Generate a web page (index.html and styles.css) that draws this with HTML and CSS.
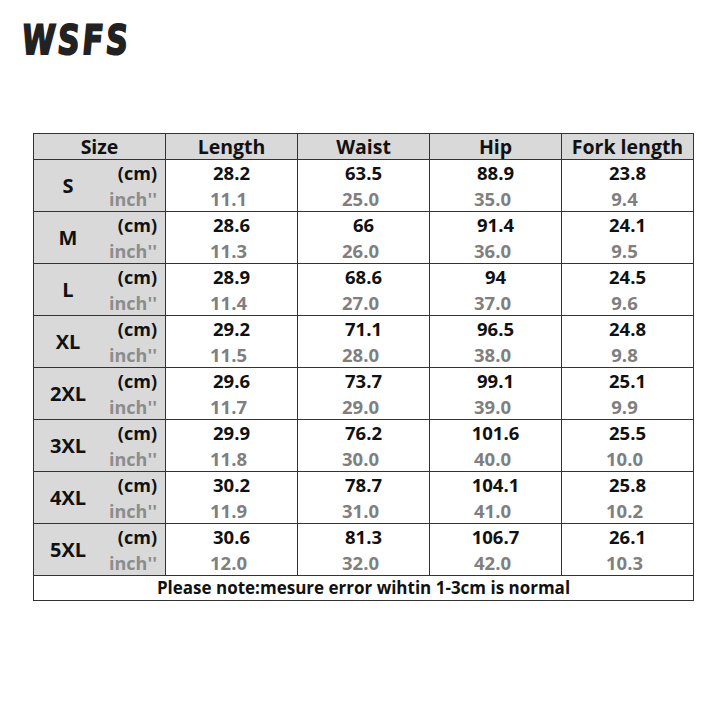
FILE: index.html
```html
<!DOCTYPE html>
<html>
<head>
<meta charset="utf-8">
<link rel="stylesheet" href="styles.css">
</head>
<body>
<div class="page">
  <div class="logo"><span class="logo-text">WSFS</span></div>
  <table class="chart">
    <colgroup>
      <col class="c"><col class="c"><col class="c"><col class="c"><col class="c">
    </colgroup>
    <thead>
      <tr class="head">
        <th>Size</th>
        <th>Length</th>
        <th>Waist</th>
        <th>Hip</th>
        <th>Fork length</th>
      </tr>
    </thead>
    <tbody>
      <tr><td class="size"><div class="sz"><span class="lbl">S</span><span class="units"><span class="u-cm">(cm)</span><span class="u-in">inch''</span></span></div></td>
        <td><div class="v"><span class="cm">28.2</span><span class="in">11.1</span></div></td>
        <td><div class="v"><span class="cm">63.5</span><span class="in">25.0</span></div></td>
        <td><div class="v"><span class="cm">88.9</span><span class="in">35.0</span></div></td>
        <td><div class="v"><span class="cm">23.8</span><span class="in">9.4</span></div></td></tr>
      <tr><td class="size"><div class="sz"><span class="lbl">M</span><span class="units"><span class="u-cm">(cm)</span><span class="u-in">inch''</span></span></div></td>
        <td><div class="v"><span class="cm">28.6</span><span class="in">11.3</span></div></td>
        <td><div class="v"><span class="cm">66</span><span class="in">26.0</span></div></td>
        <td><div class="v"><span class="cm">91.4</span><span class="in">36.0</span></div></td>
        <td><div class="v"><span class="cm">24.1</span><span class="in">9.5</span></div></td></tr>
      <tr><td class="size"><div class="sz"><span class="lbl">L</span><span class="units"><span class="u-cm">(cm)</span><span class="u-in">inch''</span></span></div></td>
        <td><div class="v"><span class="cm">28.9</span><span class="in">11.4</span></div></td>
        <td><div class="v"><span class="cm">68.6</span><span class="in">27.0</span></div></td>
        <td><div class="v"><span class="cm">94</span><span class="in">37.0</span></div></td>
        <td><div class="v"><span class="cm">24.5</span><span class="in">9.6</span></div></td></tr>
      <tr><td class="size"><div class="sz"><span class="lbl">XL</span><span class="units"><span class="u-cm">(cm)</span><span class="u-in">inch''</span></span></div></td>
        <td><div class="v"><span class="cm">29.2</span><span class="in">11.5</span></div></td>
        <td><div class="v"><span class="cm">71.1</span><span class="in">28.0</span></div></td>
        <td><div class="v"><span class="cm">96.5</span><span class="in">38.0</span></div></td>
        <td><div class="v"><span class="cm">24.8</span><span class="in">9.8</span></div></td></tr>
      <tr><td class="size"><div class="sz"><span class="lbl">2XL</span><span class="units"><span class="u-cm">(cm)</span><span class="u-in">inch''</span></span></div></td>
        <td><div class="v"><span class="cm">29.6</span><span class="in">11.7</span></div></td>
        <td><div class="v"><span class="cm">73.7</span><span class="in">29.0</span></div></td>
        <td><div class="v"><span class="cm">99.1</span><span class="in">39.0</span></div></td>
        <td><div class="v"><span class="cm">25.1</span><span class="in">9.9</span></div></td></tr>
      <tr><td class="size"><div class="sz"><span class="lbl">3XL</span><span class="units"><span class="u-cm">(cm)</span><span class="u-in">inch''</span></span></div></td>
        <td><div class="v"><span class="cm">29.9</span><span class="in">11.8</span></div></td>
        <td><div class="v"><span class="cm">76.2</span><span class="in">30.0</span></div></td>
        <td><div class="v"><span class="cm">101.6</span><span class="in">40.0</span></div></td>
        <td><div class="v"><span class="cm">25.5</span><span class="in">10.0</span></div></td></tr>
      <tr><td class="size"><div class="sz"><span class="lbl">4XL</span><span class="units"><span class="u-cm">(cm)</span><span class="u-in">inch''</span></span></div></td>
        <td><div class="v"><span class="cm">30.2</span><span class="in">11.9</span></div></td>
        <td><div class="v"><span class="cm">78.7</span><span class="in">31.0</span></div></td>
        <td><div class="v"><span class="cm">104.1</span><span class="in">41.0</span></div></td>
        <td><div class="v"><span class="cm">25.8</span><span class="in">10.2</span></div></td></tr>
      <tr><td class="size"><div class="sz"><span class="lbl">5XL</span><span class="units"><span class="u-cm">(cm)</span><span class="u-in">inch''</span></span></div></td>
        <td><div class="v"><span class="cm">30.6</span><span class="in">12.0</span></div></td>
        <td><div class="v"><span class="cm">81.3</span><span class="in">32.0</span></div></td>
        <td><div class="v"><span class="cm">106.7</span><span class="in">42.0</span></div></td>
        <td><div class="v"><span class="cm">26.1</span><span class="in">10.3</span></div></td></tr>
      <tr class="note"><td colspan="5">Please note:mesure error wihtin 1-3cm is normal</td></tr>
    </tbody>
  </table>
</div>
</body>
</html>
```

FILE: styles.css
```css
html, body {
  margin: 0;
  padding: 0;
  background: #ffffff;
}
.page {
  width: 723px;
  height: 723px;
  padding: 0 0 0 33px;
  box-sizing: border-box;
  font-family: "Open Sans", "Noto Sans", "DejaVu Sans", sans-serif;
  font-weight: 700;
  color: #111;
}
.logo {
  height: 133px;
  padding-top: 20px;
  box-sizing: border-box;
  margin-left: -12px;
}
.logo-text {
  display: inline-block;
  font-family: "DejaVu Sans", sans-serif;
  font-weight: 900;
  font-style: italic;
  font-size: 30px;
  line-height: 30px;
  letter-spacing: 3px;
  color: #222;
  -webkit-text-stroke: 1.5px #222;
  transform: scale(1.0, 1.35) skewX(4deg);
  transform-origin: left top;
}
.chart {
  border-collapse: collapse;
  width: 661px;
  table-layout: fixed;
}
.chart col.c {
  width: 132px;
}
.chart th, .chart td {
  border: 1px solid #333;
  padding: 0;
  text-align: center;
}
.head th {
  background: #d9d9d9;
  height: 25px;
  font-size: 19.5px;
  line-height: 25px;
  font-weight: 700;
  color: #111;
  white-space: nowrap;
}
.chart td.size {
  background: #d9d9d9;
  height: 51px;
}
.sz {
  display: flex;
  align-items: center;
  height: 51px;
}
.lbl {
  width: 68px;
  text-align: center;
  font-size: 20px;
  color: #111;
}
.units {
  display: flex;
  flex-direction: column;
  align-items: flex-end;
  flex: 1;
  padding-right: 8px;
  font-size: 18px;
  line-height: 26px;
}
.u-cm { color: #111; }
.u-in { color: #8c8c8c; }
.v {
  display: flex;
  flex-direction: column;
  align-items: center;
  height: 51px;
  font-size: 18.5px;
  line-height: 26px;
}
.cm { color: #111; }
.in { color: #7f7f7f; margin-right: 6px; }
.note td {
  height: 24px;
  font-size: 17px;
  line-height: 24px;
  color: #111;
}
```
